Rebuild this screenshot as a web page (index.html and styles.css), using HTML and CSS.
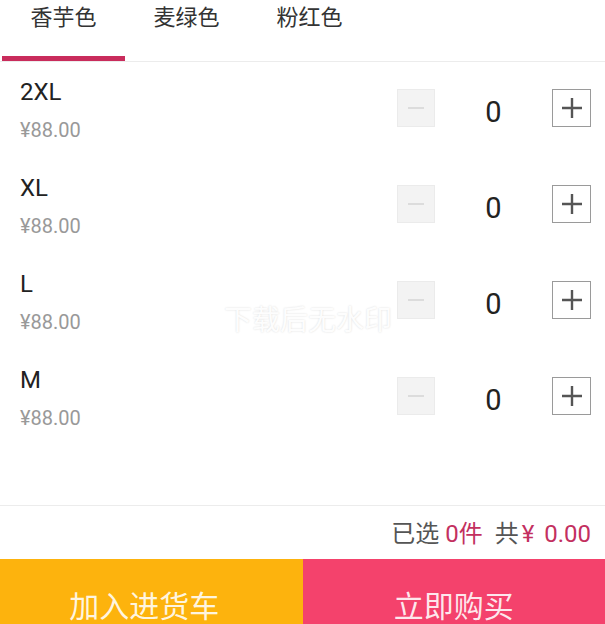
FILE: index.html
```html
<!DOCTYPE html>
<html lang="zh-CN">
<head>
    <meta charset="UTF-8">
    <meta name="viewport" content="width=device-width, initial-scale=1.0">
    <title>选择规格</title>
    <link rel="stylesheet" href="styles.css">
</head>
<body>
    <div class="page">
        <!-- color tabs -->
        <div class="tabs">
            <div class="tab active">香芋色</div>
            <div class="tab">麦绿色</div>
            <div class="tab">粉红色</div>
        </div>

        <!-- size list -->
        <div class="list">
            <div class="row">
                <div class="info">
                    <div class="size">2XL</div>
                    <div class="price">¥88.00</div>
                </div>
                <div class="stepper">
                    <span class="btn minus"><svg width="16" height="2" viewBox="0 0 16 2"><rect width="16" height="2" fill="#dcdcdc"/></svg></span>
                    <span class="count">0</span>
                    <span class="btn plus"><svg width="22" height="22" viewBox="0 0 22 22"><path d="M11 1v20M1 11h20" stroke="#555" stroke-width="2.4"/></svg></span>
                </div>
            </div>
            <div class="row">
                <div class="info">
                    <div class="size">XL</div>
                    <div class="price">¥88.00</div>
                </div>
                <div class="stepper">
                    <span class="btn minus"><svg width="16" height="2" viewBox="0 0 16 2"><rect width="16" height="2" fill="#dcdcdc"/></svg></span>
                    <span class="count">0</span>
                    <span class="btn plus"><svg width="22" height="22" viewBox="0 0 22 22"><path d="M11 1v20M1 11h20" stroke="#555" stroke-width="2.4"/></svg></span>
                </div>
            </div>
            <div class="row">
                <div class="info">
                    <div class="size">L</div>
                    <div class="price">¥88.00</div>
                </div>
                <div class="stepper">
                    <span class="btn minus"><svg width="16" height="2" viewBox="0 0 16 2"><rect width="16" height="2" fill="#dcdcdc"/></svg></span>
                    <span class="count">0</span>
                    <span class="btn plus"><svg width="22" height="22" viewBox="0 0 22 22"><path d="M11 1v20M1 11h20" stroke="#555" stroke-width="2.4"/></svg></span>
                </div>
            </div>
            <div class="row">
                <div class="info">
                    <div class="size">M</div>
                    <div class="price">¥88.00</div>
                </div>
                <div class="stepper">
                    <span class="btn minus"><svg width="16" height="2" viewBox="0 0 16 2"><rect width="16" height="2" fill="#dcdcdc"/></svg></span>
                    <span class="count">0</span>
                    <span class="btn plus"><svg width="22" height="22" viewBox="0 0 22 22"><path d="M11 1v20M1 11h20" stroke="#555" stroke-width="2.4"/></svg></span>
                </div>
            </div>
        </div>

        <!-- summary -->
        <div class="summary">已选 <span class="hl">0件</span><span class="gap"></span>共<span class="hl cur">¥ 0.00</span></div>

        <!-- action buttons -->
        <div class="actions">
            <div class="action cart">加入进货车</div>
            <div class="action buy">立即购买</div>
        </div>

        <div class="watermark">下载后无水印</div>
    </div>
</body>
</html>
```

FILE: styles.css
```css
html, body { margin: 0; padding: 0; overflow: hidden; }
body { background: #fff; font-family: Roboto, "Noto Sans CJK SC", sans-serif; color: #333; }
.page { position: relative; width: 605px; }

.tabs { display: flex; height: 62px; padding-left: 2px; border-bottom: 1px solid #ececec; box-sizing: border-box; }
.tab { width: 123px; height: 61px; box-sizing: border-box; text-align: center; font-size: 22px; line-height: 36px; color: #333; }
.tab.active { border-bottom: 5px solid #c92c5c; }

.list { height: 444px; border-bottom: 1px solid #ececec; box-sizing: border-box; }
.row { display: flex; align-items: center; justify-content: space-between; height: 96px; padding: 0 14px 0 20px; }
.size { font-size: 24px; line-height: 28px; color: #222; }
.price { font-size: 20px; line-height: 24px; color: #999; margin-top: 12px; }

.stepper { display: flex; align-items: center; margin-top: -4px; }
.btn { display: flex; align-items: center; justify-content: center; width: 38px; height: 38px; box-sizing: border-box; }
.minus { background: #f3f3f3; border: 1px solid #ebebeb; }
.plus { width: 39px; border: 1px solid #9a9a9a; background: #fff; }
.count { width: 117px; text-align: center; font-size: 29px; color: #222; margin-top: 8px; }

.summary { height: 53px; line-height: 56px; text-align: right; padding-right: 14px; font-size: 24px; color: #555; }
.summary .hl { color: #c3305f; }
.summary .gap { display: inline-block; width: 12px; }
.summary .cur { margin-left: 3px; word-spacing: 4px; }

.actions { display: flex; height: 90px; }
.action { width: 50%; box-sizing: border-box; display: flex; align-items: center; justify-content: center; font-size: 30px; color: rgba(255, 255, 255, 0.88); }
.cart { background: #fdb30d; padding-right: 14px; }
.buy { background: #f4426c; }

.watermark { position: absolute; left: 224px; top: 298px; font-size: 28px; color: rgba(255, 255, 255, 0.95); text-shadow: 0 0 2px rgba(0, 0, 0, 0.15); pointer-events: none; }
```
